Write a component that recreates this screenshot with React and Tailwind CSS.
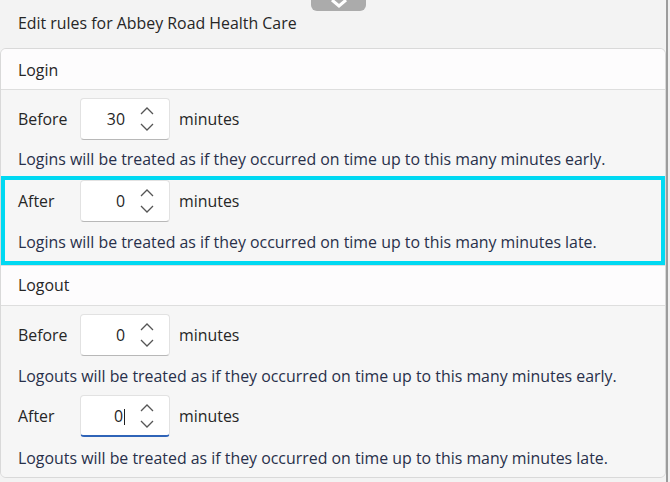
import React from 'react';

const Spinner = ({ value, focused }) => (
  <div
    className={`relative flex items-center h-[42px] w-[90px] bg-white rounded-[4px] border border-[#e2e2e2] ${
      focused ? 'border-b-[2px] border-b-[#2f64b8]' : 'border-b-[#b8b8b8]'
    }`}
  >
    <span className="w-[44px] text-right text-[#1f1f1f] pt-[2px]">
      {value}
      {focused && <span className="inline-block w-[1px] h-[16px] bg-[#1f1f1f] align-middle ml-[1px]" />}
    </span>
    <svg className="ml-[14px]" width="16" height="28" viewBox="0 0 16 28" fill="none" stroke="#555" strokeWidth="1.3">
      <polyline points="2,9 8,3 14,9" />
      <polyline points="2,19 8,25 14,19" />
    </svg>
  </div>
);

const Row = ({ label, value, focused }) => (
  <div className="flex items-center h-[42px]">
    <span className="w-[62px] pt-[2px]">{label}</span>
    <Spinner value={value} focused={focused} />
    <span className="ml-[9px] pt-[2px]">minutes</span>
  </div>
);

const Help = ({ children, h = 'h-[36px]' }) => (
  <div className={`flex items-center pt-[3px] ${h} text-[#28304a]`}>{children}</div>
);

const App = () => {
  return (
    <div
      className="relative w-[670px] h-[482px] overflow-hidden bg-[#f3f3f3] text-[15.9px] text-[#262626]"
      style={{ fontFamily: '"Open Sans", "Noto Sans", sans-serif' }}
    >
      {/* drag handle */}
      <div className="absolute left-[311px] top-0 w-[55px] h-[11px] bg-[#ababab] rounded-b-[6px] flex justify-center">
        <svg width="22" height="9" viewBox="0 0 22 9" fill="none" stroke="#fff" strokeWidth="3">
          <polyline points="4,0 11,6 18,0" />
        </svg>
      </div>

      <div className="flex">
        <div className="w-[666px]">
          <div className="h-[48px] px-[18px] pt-[12px]">Edit rules for Abbey Road Health Care</div>

          <div className="border border-[#d9d9d9] rounded-[6px] overflow-hidden">
            {/* Login */}
            <div className="h-[41px] pt-[3px] bg-[#fdfcfd] border-b border-[#dedede] flex items-center px-[17px]">Login</div>
            <div className="bg-[#f6f6f6]">
              <div className="px-[17px] pt-[8px]">
                <Row label="Before" value="30" />
                <Help>Logins will be treated as if they occurred on time up to this many minutes early.</Help>
              </div>
              <div className="border-[4px] border-[#00d9f2] px-[13px]">
                <Row label="After" value="0" />
                <Help h="h-[39px]">Logins will be treated as if they occurred on time up to this many minutes late.</Help>
              </div>
            </div>

            {/* Logout */}
            <div className="h-[41px] pt-[1px] bg-[#fdfcfd] border-t border-b border-[#dedede] flex items-center px-[17px]">Logout</div>
            <div className="bg-[#f6f6f6] px-[17px] pt-[8px]">
              <Row label="Before" value="0" />
              <Help h="h-[39px]">Logouts will be treated as if they occurred on time up to this many minutes early.</Help>
              <Row label="After" value="0" focused />
              <Help h="h-[40px]">Logouts will be treated as if they occurred on time up to this many minutes late.</Help>
            </div>
          </div>
        </div>
        <div className="w-[4px] h-[482px] bg-[#f0f0f0] border-l-[2px] border-[#9c9c9c]" />
      </div>
    </div>
  );
};

export default App;
